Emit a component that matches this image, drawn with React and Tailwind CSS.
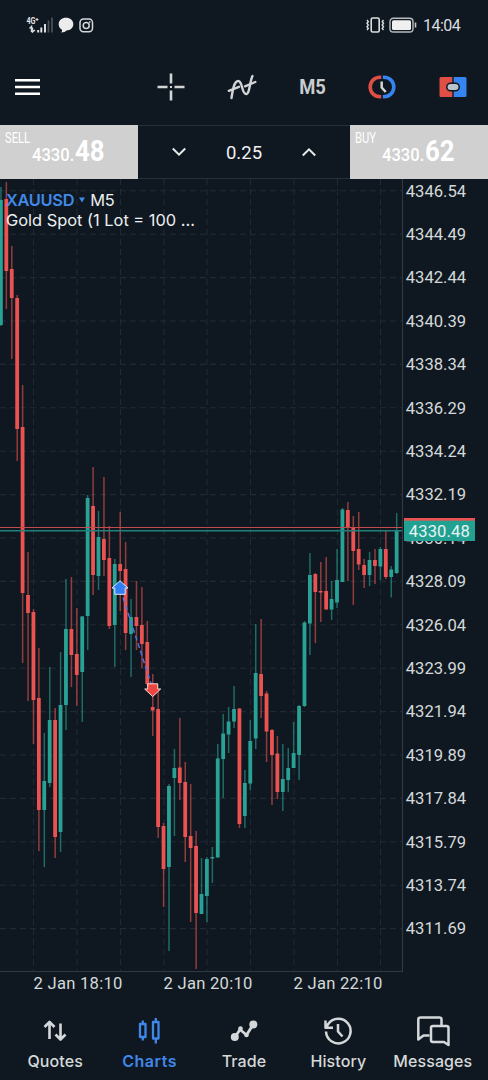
import React from "react";

// Every candle: [high, body top, body bottom, low, direction]
const candles = [
  [187, 200, 325, 326, "up"],
  [182, 199, 271, 309, "down"],
  [246, 269, 298, 359, "down"],
  [295, 298, 429, 461, "down"],
  [385, 427, 593, 663, "down"],
  [552, 595, 613, 701, "down"],
  [609, 612, 700, 744, "down"],
  [648, 698, 810, 851, "down"],
  [733, 781, 810, 867, "up"],
  [667, 720, 783, 787, "up"],
  [708, 720, 837, 858, "down"],
  [652, 705, 832, 852, "up"],
  [579, 629, 705, 730, "up"],
  [577, 629, 655, 687, "down"],
  [608, 654, 675, 706, "down"],
  [616, 616.5, 672, 722, "up"],
  [495, 498, 616, 650, "up"],
  [467, 506, 575, 595, "down"],
  [511, 537, 576, 590, "up"],
  [477, 539, 560, 576, "down"],
  [526, 558, 626, 629, "down"],
  [559, 564, 625, 667, "up"],
  [512, 564, 571, 611, "down"],
  [542, 569, 633, 650, "down"],
  [599, 617, 634, 677, "up"],
  [581, 617, 626, 650, "down"],
  [587, 625, 644, 668, "down"],
  [621, 642, 684, 686, "down"],
  [674, 707, 710.5, 736, "down"],
  [692, 709, 827, 838, "down"],
  [823, 826, 869, 907, "down"],
  [784, 786, 867, 951, "up"],
  [749, 768, 778, 836, "up"],
  [718, 767.5, 783, 800, "down"],
  [762, 782, 837, 862, "down"],
  [784, 836, 848, 922, "down"],
  [831, 846, 913, 969, "down"],
  [858, 894, 914, 914, "up"],
  [857, 859, 896, 922, "up"],
  [847, 857, 858.5, 883, "up"],
  [744, 758.5, 857.5, 857.5, "up"],
  [714, 733.5, 759, 798, "up"],
  [707, 721.5, 734.5, 753, "up"],
  [686, 709, 721.5, 728, "up"],
  [708, 708.5, 824, 828, "down"],
  [770, 783, 816, 828, "up"],
  [720, 741, 783.5, 790, "up"],
  [624, 673, 738.5, 749, "up"],
  [619, 674, 696, 718, "down"],
  [691, 693.5, 731.5, 762, "down"],
  [729, 730, 755, 805, "down"],
  [736, 753.5, 792, 799, "down"],
  [744, 779, 792, 811, "up"],
  [748, 768, 780, 792, "up"],
  [722, 753, 768, 768, "up"],
  [705, 706, 755, 780, "up"],
  [621, 622.5, 706, 707, "up"],
  [553, 575, 623.5, 655, "up"],
  [573, 574, 592, 643, "down"],
  [562, 591, 592.5, 622, "down"],
  [557, 591, 609.5, 609.5, "down"],
  [581, 599, 609.5, 620, "up"],
  [549, 580, 602.5, 608, "up"],
  [508, 509.5, 582, 582, "up"],
  [502, 510, 528, 581, "down"],
  [516, 527, 551, 605, "down"],
  [512, 549, 564.5, 570, "down"],
  [559, 565, 575, 588, "down"],
  [552, 560, 575, 586, "up"],
  [549, 560, 566, 584, "down"],
  [547, 549, 566.5, 580, "up"],
  [530, 549, 577, 579, "down"],
  [566, 569.5, 577, 597.5, "up"],
  [513, 530.5, 573, 574, "up"],
];

const prices = [
  "4346.54",
  "4344.49",
  "4342.44",
  "4340.39",
  "4338.34",
  "4336.29",
  "4334.24",
  "4332.19",
  "4330.14",
  "4328.09",
  "4326.04",
  "4323.99",
  "4321.94",
  "4319.89",
  "4317.84",
  "4315.79",
  "4313.74",
  "4311.69",
];

const times = [
  { label: "2 Jan 18:10", x: 33.5 },
  { label: "2 Jan 20:10", x: 163.5 },
  { label: "2 Jan 22:10", x: 293.5 },
];

const gridX = [33.5, 77, 120.5, 164, 207, 250.5, 294, 337.5, 380.5];

const priceY = (i) => 190.8 + i * 43.4;
const candleX = (i) => 0.9 + i * 5.421;

function StatusBar() {
  return (
    <div className="flex h-[50px] items-center pl-[26px] pr-[27px]">
      <svg width="27" height="16" viewBox="0 0 27 16">
        <text x="0.5" y="7" fontSize="8.500" fontWeight="700" fill="#e4e6e8" textLength="9" lengthAdjust="spacingAndGlyphs">
          4G
        </text>
        <path d="M9.500 2.500h3M11 1v3" stroke="#d8dadc" strokeWidth="1" />
        <path d="M3.500 11.500 5.500 9.500v5.500M6.500 10.500v4.500l2.500-2" stroke="#d8dadc" strokeWidth="1.400" fill="none" />
        <path d="M12.200 13v2.500M15.300 10.500v5M19 7v8.500" stroke="#e4e6e8" strokeWidth="1.900" />
        <path d="M22.500 3.500v12M26 0.500v15" stroke="#4b5259" strokeWidth="1.700" />
      </svg>
      <svg className="ml-[5px]" width="16" height="16" viewBox="0 0 16 16">
        <path d="M8 .8c4.200 0 7.300 2.700 7.300 6.400S12.200 13.400 8.500 13.400c-1 1-2.600 2-5.300 2 .8-.8 1-1.800.8-2.700C1.900 11.500.7 9.600.7 7.200.7 3.500 3.800.8 8 .8Z" fill="#ececec" />
      </svg>
      <svg className="ml-[5px]" width="15" height="15" viewBox="0 0 15 15" fill="none" stroke="#d6d8da">
        <rect x="1" y="1" width="12.500" height="12.800" rx="3.500" strokeWidth="1.500" />
        <circle cx="7.200" cy="7.500" r="3" strokeWidth="1.500" />
        <circle cx="10.800" cy="4" r=".5" />
      </svg>
      <div className="ml-auto flex items-center">
        <svg width="19" height="16" viewBox="0 0 19 16" fill="none" stroke="#dcdee0">
          <rect x="5.200" y="1" width="8" height="14" rx="1.500" strokeWidth="1.600" />
          <path d="M1 3l1.300 1.700L1 6.300 2.300 8 1 9.700l1.300 1.700L1 13M17.500 3l-1.300 1.700 1.300 1.600L16.200 8l1.300 1.700-1.300 1.700 1.300 1.600" strokeWidth="1.400" />
        </svg>
        <svg className="ml-1" width="28" height="16" viewBox="0 0 28 16">
          <rect x="1" y="1.200" width="23" height="13.800" rx="3.300" fill="none" stroke="#b7babd" strokeWidth="1.400" />
          <rect x="3" y="3.200" width="19" height="9.800" rx="1.500" fill="#f0f0f0" />
          <path d="M26.500 5.500v5" stroke="#c4c6c8" strokeWidth="1.600" />
        </svg>
        <span className="ml-[6px] w-[38px] pt-px text-[16px] leading-4 tracking-[-0.500px] text-[#dcdee0]">14:04</span>
      </div>
    </div>
  );
}

function Toolbar() {
  return (
    <div className="flex h-[75px] items-center pb-[2px]">
      <svg className="ml-[15px]" width="25" height="20" viewBox="0 0 25 20">
        <path d="M0 3.200h25M0 10h25M0 16.700h25" stroke="#fff" strokeWidth="2.600" />
      </svg>
      <div className="ml-auto grid w-[352px] grid-cols-5 items-center justify-items-center">
        <svg width="28" height="28" viewBox="0 0 28 28">
          <path d="M14 .5v10M14 17.500v10M.5 14h10M17.500 14h10" stroke="#d2d4d6" strokeWidth="2.600" />
          <rect x="13" y="13" width="2" height="2" fill="#d2d4d6" />
        </svg>
        <svg width="30" height="26" viewBox="0 0 30 26" fill="none" stroke="#d2d4d6" strokeWidth="2.400" strokeLinecap="round">
          <path d="M4.500 24C5.500 17 7 7 11.200 7c4.600 0 3.300 13 8 13 3.600 0 3.300-12 6.300-18" />
          <path d="M1.800 16.800 12 12.800M18 12.300 28.300 8" />
        </svg>
        <span className="origin-center scale-x-[0.92] text-[20px] font-bold leading-6 text-[#c9ccce]">M5</span>
        <svg width="28" height="24" viewBox="0 0 28 24" fill="none">
          <path d="M13.200 2.200h-1C5.800 2.200 2.200 7 2.200 12s3.600 9.800 10 9.800h1" stroke="#e04f45" strokeWidth="3.600" />
          <path d="M14.800 2.200h1c6.400 0 10 4.800 10 9.800s-3.600 9.800-10 9.800h-1" stroke="#3584f0" strokeWidth="3.600" />
          <path d="M13.700 6.500v6l4 4.500" stroke="#d2d4d6" strokeWidth="2.500" />
        </svg>
        <svg width="28" height="20" viewBox="0 0 28 20">
          <path d="M2 0h11.300v20H2a1.500 1.500 0 0 1-1.500-1.500v-17A1.500 1.500 0 0 1 2 0Z" fill="#e04f45" />
          <path d="M14.700 0H26a1.500 1.500 0 0 1 1.500 1.500v17A1.500 1.500 0 0 1 26 20H14.700Z" fill="#3584f0" />
          <rect x="7.800" y="6.300" width="12.400" height="7.400" rx="3.700" fill="#b9c4cd" stroke="#0f1820" strokeWidth="1.500" />
        </svg>
      </div>
    </div>
  );
}

function PriceButton({ side, price, pips }) {
  return (
    <div className="flex h-full w-[138px] flex-col bg-[#d0d0d0] pl-[5px] text-white">
      <span className="mt-[6px] origin-left scale-x-[0.8] text-[14px] leading-[14px]">{side}</span>
      <div className="-mt-[6px] flex items-baseline pl-[27px] leading-[24px]">
        <span className="w-[43px] origin-left scale-x-[0.92] text-[18px] font-medium">{price}</span>
        <span className="origin-left scale-x-[0.86] text-[30px] font-bold">{pips}</span>
      </div>
    </div>
  );
}

function OrderPanel() {
  return (
    <div className="flex h-[54px]">
      <PriceButton side="SELL" price="4330." pips="48" />
      <div className="flex flex-1 items-center justify-between border-y border-[#262e37] px-[34px]">
        <svg width="14" height="10" viewBox="0 0 14 10" fill="none" stroke="#e8eaec" strokeWidth="2">
          <path d="m.8 1.500 6.200 6.200 6.200-6.200" />
        </svg>
        <span className="pt-0.5 text-[18.500px] leading-5 text-[#f0f1f2]">0.25</span>
        <svg width="14" height="10" viewBox="0 0 14 10" fill="none" stroke="#e8eaec" strokeWidth="2">
          <path d="m.8 8.500 6.200-6.200 6.200 6.200" />
        </svg>
      </div>
      <PriceButton side="BUY" price="4330." pips="62" />
    </div>
  );
}

function Chart() {
  return (
    <div className="relative h-[821px]">
      <svg className="block" width="488" height="821" viewBox="0 179 488 821">
        {/* grid */}
        <g stroke="#212a33" strokeWidth="1.100" strokeDasharray="6 4">
          {prices.map((p, i) => (
            <path key={p} d={`M0 ${priceY(i)}H402`} />
          ))}
          {gridX.map((x) => (
            <path key={x} d={`M${x} 179V971`} />
          ))}
        </g>
        <path d="M402.500 179V971.500M0 971.500H403" stroke="#303841" strokeWidth="1.200" fill="none" />

        {candles.map(([high, top, bottom, low, dir], i) => (
          <g key={i} fill={dir === "up" ? "#2aa195" : "#ea5351"}>
            <rect x={candleX(i) - 0.7} y={high} width="1.500" height={low - high} opacity="0.6" />
            <rect x={candleX(i) - 1.9} y={top} width="3.800" height={bottom - top} />
          </g>
        ))}

        {/* ask and bid */}
        <path d="M0 527.500H402" stroke="#c24b4e" strokeWidth="1" />
        <path d="M0 530.700H402" stroke="#237f79" strokeWidth="1.400" />

        {/* position */}
        <path d="M120.500 590 152.500 688" stroke="#4f76e8" strokeWidth="1.400" strokeDasharray="5 3" />
        <path d="m120 580.800 8 7.200h-2.800v6.300h-10.400V588H112Z" fill="#2f7ff5" stroke="#dfe8f8" strokeWidth="1" strokeLinejoin="round" />
        <path d="m152.700 696.500-8-7.500h3v-5.200h10V689h3Z" fill="#ee4540" stroke="#f7dcda" strokeWidth="1" strokeLinejoin="round" />

        <g fill="#d5d8da" fontSize="16.600">
          {prices.map((p, i) => (
            <text key={p} x="405.800" y={priceY(i) + 5.700}>
              {p}
            </text>
          ))}
        </g>
        <rect x="404" y="518" width="71" height="20" fill="#ea5351" />
        <rect x="404" y="520.700" width="71" height="20.300" fill="#22a193" />
        <text x="408.800" y="536.500" fontSize="16.600" fill="#e6f4f2" letterSpacing="0.100">
          4330.48
        </text>
        <g fill="#d5d8da" fontSize="16.600" letterSpacing="0.260">
          {times.map((t) => (
            <text key={t.label} x={t.x} y="989">
              {t.label}
            </text>
          ))}
        </g>
      </svg>

      <div className="absolute left-[6px] top-[11px] font-['Inter',sans-serif] text-[16.400px] leading-5 text-[#eceef0]">
        <div className="flex items-center">
          <span className="font-semibold tracking-[-0.3px] text-[#4189e8]">XAUUSD</span>
          <svg className="mx-[5px]" width="6" height="6" viewBox="0 0 6 6">
            <path d="M0 .5h6L3 5.500Z" fill="#4189e8" />
          </svg>
          <span className="tracking-[-0.3px]">M5</span>
        </div>
        <div>Gold Spot (1 Lot = 100 ...</div>
      </div>
    </div>
  );
}

const tabs = [
  {
    label: "Quotes",
    icon: <path d="M12.500 26V9.500M7.500 14l5-5 5 5M23.500 10.500V26M18.500 21.500l5 5 5-5" strokeWidth="2.600" />,
  },
  {
    label: "Charts",
    active: true,
    icon: <path d="M8 11h5.500v13H8ZM10.800 7.500V11M10.800 24v3.500M21 9h5.500v16.500H21ZM23.800 5v4M23.800 25.500V30.500" strokeWidth="2.300" />,
  },
  {
    label: "Trade",
    icon: (
      <>
        <path d="m8.500 25 5.500-8.500 6.500 5.500L27.500 11" strokeWidth="2.800" />
        <g fill="currentColor" stroke="none">
          <circle cx="8.800" cy="24" r="4" />
          <circle cx="14.500" cy="15.500" r="2.300" />
          <circle cx="20.500" cy="22" r="2.300" />
          <circle cx="27.300" cy="11.500" r="4" />
        </g>
      </>
    ),
  },
  {
    label: "History",
    icon: <path d="M6 18.500A12.300 12.300 0 1 0 8.200 11L6 14.500M5.500 7.500v7.300H13M18 11v7.500l4.500 5" strokeWidth="2.500" />,
  },
  {
    label: "Messages",
    icon: (
      <>
        <path d="M14.500 22.500H8.500L3.300 26.500V6.500a2 2 0 0 1 2-2H24.500a2 2 0 0 1 2 2V12" strokeWidth="2.500" />
        <path d="M18 13h13.500a2 2 0 0 1 2 2v17l-4.500-3H18a2 2 0 0 1-2-2V15a2 2 0 0 1 2-2Z" strokeWidth="2.500" />
      </>
    ),
  },
];

function TabBar() {
  return (
    <div className="grid h-20 grid-cols-5 px-2 pt-[13px] font-['Inter',sans-serif]">
      {tabs.map((tab) => (
        <div
          key={tab.label}
          className={tab.active ? "flex flex-col items-center font-semibold tracking-[0.5px] text-[#3f87ea]" : "flex flex-col items-center font-medium tracking-[0.1px] text-[#d5d8da]"}
        >
          <svg width="36" height="36" viewBox="0 0 36 36" fill="none" stroke="currentColor" strokeLinejoin="round">
            {tab.icon}
          </svg>
          <span className="mt-[2px] text-[16px] leading-5">{tab.label}</span>
        </div>
      ))}
    </div>
  );
}

export default function App() {
  return (
    <div className="flex h-[1080px] w-[488px] flex-col overflow-hidden bg-[#0f1820] font-['Roboto',sans-serif]">
      <StatusBar />
      <Toolbar />
      <OrderPanel />
      <Chart />
      <TabBar />
    </div>
  );
}
